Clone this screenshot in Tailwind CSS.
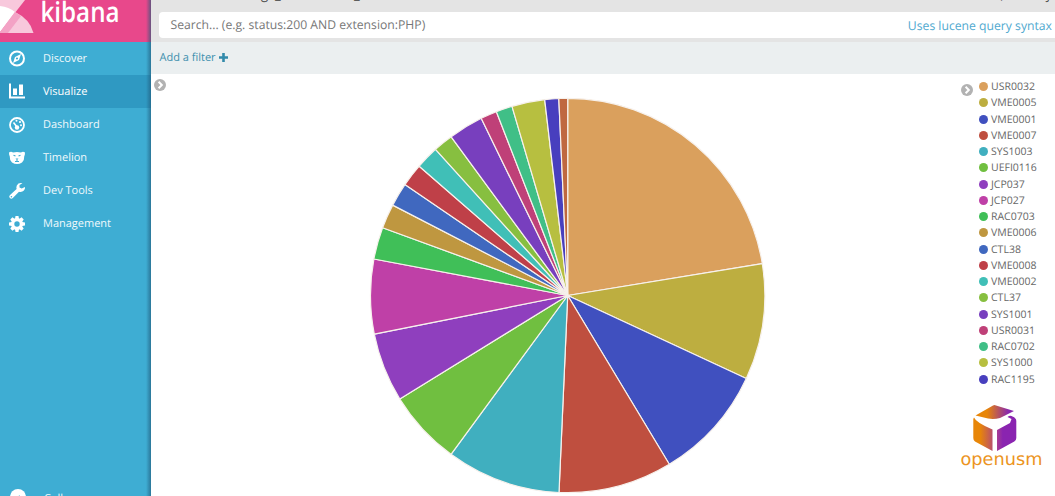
<!DOCTYPE html>
<html lang="en">
<head>
<meta charset="utf-8">
<title>Kibana</title>
<script src="https://cdn.jsdelivr.net/npm/@tailwindcss/browser@4"></script>
</head>
<body class="h-[496px] w-[1055px] overflow-hidden bg-white font-['Open_Sans',sans-serif] [text-rendering:geometricPrecision]">
<div class="flex h-[496px] overflow-hidden">
  <aside class="relative flex w-[151px] shrink-0 flex-col bg-[#3eadd3] text-[11px] text-[#f0f9fc]">
    <div class="h-[42px] shrink-0 bg-[#e8488b]">
      <svg width="151" height="42" viewBox="0 0 151 42">
        <path d="M0 0H25L0 32Z" fill="#f8c8dc"/>
        <path d="M0 6Q9 7 15 12L0 32Z" fill="#fff"/>
        <path d="M15 12Q30 19 33.500 33H0Z" fill="#f8c8dc"/>
        <path d="M15 12L21 16L8 33H0V32Z" fill="#f3a2c5"/>
        <text x="40.500" y="21.500" textLength="79" lengthAdjust="spacingAndGlyphs" font-family="Open Sans" font-size="28" font-weight="600" fill="#fff">kibana</text>
      </svg>
    </div>
    <nav class="flex flex-col">
      <a class="flex h-[33px] items-center gap-[17px] pl-2">
        <svg width="18" height="18" viewBox="0 0.500 18 18"><circle cx="9" cy="9" r="7" fill="none" stroke="#fff" stroke-width="2"/><path d="M13 4.500L11 10.500L5 13.500L7 7.500ZM9 7.900A1.100 1.100 0 1 0 9 10.100A1.100 1.100 0 1 0 9 7.900" fill="#fff" fill-rule="evenodd"/></svg>
        <span class="pt-[2px]">Discover</span></a>
      <a class="flex h-[33px] items-center gap-[17px] bg-[#2f99c2] pl-2 text-white">
        <svg width="18" height="18" viewBox="0 0.500 18 18"><path d="M1 1H3V14H17V16H1ZM5 6H9V12.500H5ZM11 2H15V12.500H11Z" fill="#fff"/></svg>
        <span class="pt-[2px]">Visualize</span></a>
      <a class="flex h-[33px] items-center gap-[17px] pl-2">
        <svg width="18" height="18" viewBox="0 0 18 18"><circle cx="9" cy="9" r="7" fill="none" stroke="#fff" stroke-width="1.800"/><circle cx="9" cy="11.500" r="2.200" fill="#fff"/><path d="M5.500 6.500L9 11" stroke="#fff" stroke-width="1.600"/><circle cx="8.500" cy="4.800" r="1" fill="#fff"/><circle cx="12" cy="6" r="1.100" fill="#fff"/><circle cx="13" cy="9.200" r="1" fill="#fff"/></svg>
        <span class="pt-[2px]">Dashboard</span></a>
      <a class="flex h-[33px] items-center gap-[17px] pl-2">
        <svg width="18" height="18" viewBox="0 0 18 18"><path d="M1 3.500Q3 2 5 3.500Q9 2.500 13 3.500Q15 2 17 3.500Q17 6 16.300 7Q16.500 11 14 13.500Q9 16.500 4 13.500Q1.500 11 1.700 7Q1 6 1 3.500Z" fill="#fff"/><path d="M5.500 6.300L7.500 7M12.500 6.300L10.500 7M7 12.500H11M9 10.500V12.500" stroke="#3eadd3" stroke-width="1.100"/><path d="M7.500 9.500H10.500L9 11Z" fill="#3eadd3"/></svg>
        <span class="pt-[2px]">Timelion</span></a>
      <a class="flex h-[33px] items-center gap-[17px] pl-2">
        <svg width="18" height="18" viewBox="0 0 18 18"><path d="M14.500 1.300Q10.500.3 8.800 3.500Q8 5.500 8.600 7L1.800 13.200Q.5 14.700 1.900 16.100Q3.400 17.300 4.800 16L11 9.800Q14 10.500 15.900 8.500Q17.400 6.700 17 5L13.700 6.600L11.500 5.500V3.100Z" fill="#fff"/><circle cx="3.400" cy="14.700" r=".8" fill="#3eadd3"/></svg>
        <span class="pt-[2px]">Dev Tools</span></a>
      <a class="flex h-[33px] items-center gap-[17px] pl-2">
        <svg width="18" height="18" viewBox="0 0 18 18"><g fill="#fff"><path d="M7.500 1H10.500L11 4H7ZM7.500 17H10.500L11 14H7ZM1 7.500V10.500L4 11V7ZM17 7.500V10.500L14 11V7Z"/><path transform="rotate(45 9 9)" d="M7.500 1H10.500L11 4H7ZM7.500 17H10.500L11 14H7ZM1 7.500V10.500L4 11V7ZM17 7.500V10.500L14 11V7Z"/></g><circle cx="9" cy="9" r="4.300" fill="none" stroke="#fff" stroke-width="3.200"/></svg>
        <span class="pt-[2px]">Management</span></a>
    </nav>
    <a class="mt-auto -mb-[19px] flex h-[33px] shrink-0 items-center gap-[17px] pl-[9px]">
      <svg class="overflow-visible" width="18" height="18" viewBox="0 0 18 18"><circle cx="9" cy="7" r="8" fill="#fff"/><path d="M11 6L7 10L11 14" fill="none" stroke="#3eadd3" stroke-width="2"/></svg>
      <span class="pt-[2px]">Collapse</span></a>
    <div class="absolute inset-y-0 right-0 w-[5px] bg-linear-to-r from-transparent to-[#20597a]/65"></div>
  </aside>

  <main class="flex min-w-0 flex-1 flex-col">
    <header class="relative h-[42px] shrink-0 overflow-hidden bg-[#e4e4e4] pt-3 pl-2">
      <div class="absolute -top-[15px] left-[110px] flex h-[18px] text-[13px] leading-[18px] text-[#444]"><span class="w-[14px]">g</span><span class="w-[79px]">_</span><span>_</span></div>
      <div class="absolute -top-[15px] right-[3px] flex h-[18px] text-[13px] leading-[18px] text-[#444]"><span class="w-[45px]">,</span><span>y</span></div>
      <div class="flex h-[26px] items-center justify-between rounded-l bg-white pr-[3px] pl-[11.500px]">
        <span class="text-[12.200px] text-[#777]">Search... (e.g. status:200 AND extension:PHP)</span>
        <span class="pt-[2px] text-[12.200px] text-[#50a9cf]">Uses lucene query syntax</span>
      </div>
    </header>
    <div class="flex h-8 shrink-0 items-center gap-[3px] bg-[#ebeff0] pl-[8.500px] text-[11px] text-[#3f8fae]">
      <span>Add a filter</span>
      <svg class="mb-px" width="9" height="9" viewBox="0 0 9 9"><path d="M4.500 0V9M0 4.500H9" stroke="#328aaa" stroke-width="2.600"/></svg>
    </div>
    <section class="flex flex-1">
      <svg class="mt-[5px] ml-[3px] shrink-0" width="12" height="12" viewBox="0 0 12 12"><circle cx="6" cy="6" r="6" fill="#b2b2b2"/><path d="M4.600 2.800L7.800 6L4.600 9.200" fill="none" stroke="#fff" stroke-width="2"/></svg>
      <svg class="ml-[194px] shrink-0" width="420" height="422" viewBox="360 74 420 422" stroke="#f7f1ec" stroke-width="1.200" stroke-linejoin="bevel">
        <path fill="#daa05d" d="M567.700 295.500V98.300A197.200 197.200 0 0 1 762.300 263.700Z"/>
        <path fill="#bdae40" d="M567.700 295.500L762.300 263.700A197.200 197.200 0 0 1 746.300 378.500Z"/>
        <path fill="#4050bf" d="M567.700 295.500L746.300 378.500A197.200 197.200 0 0 1 669.300 464.300Z"/>
        <path fill="#bf4f3f" d="M567.700 295.500L669.300 464.300A197.200 197.200 0 0 1 559 492.500Z"/>
        <path fill="#40afbf" d="M567.700 295.500L559 492.500A197.200 197.200 0 0 1 451 454.300Z"/>
        <path fill="#70bf40" d="M567.700 295.500L451 454.300A197.200 197.200 0 0 1 399.800 399Z"/>
        <path fill="#8f3fbe" d="M567.700 295.500L399.800 399A197.200 197.200 0 0 1 374.300 334.100Z"/>
        <path fill="#bf40a7" d="M567.700 295.500L374.300 334.100A197.200 197.200 0 0 1 373.900 259Z"/>
        <path fill="#40bf58" d="M567.700 295.500L373.900 259A197.200 197.200 0 0 1 382.600 227.700Z"/>
        <path fill="#bf9740" d="M567.700 295.500L382.600 227.700A197.200 197.200 0 0 1 392.700 205.100Z"/>
        <path fill="#4068bf" d="M567.700 295.500L392.700 205.100A197.200 197.200 0 0 1 404.900 184.600Z"/>
        <path fill="#bf4048" d="M567.700 295.500L404.900 184.600A197.200 197.200 0 0 1 419.200 166.200Z"/>
        <path fill="#40bfb7" d="M567.700 295.500L419.200 166.200A197.200 197.200 0 0 1 435.500 149.300Z"/>
        <path fill="#87bf40" d="M567.700 295.500L435.500 149.300A197.200 197.200 0 0 1 451.200 136.800Z"/>
        <path fill="#783fbe" d="M567.700 295.500L451.200 136.800A197.200 197.200 0 0 1 481.200 118.300Z"/>
        <path fill="#bf4078" d="M567.700 295.500L481.200 118.300A197.200 197.200 0 0 1 496.400 111.700Z"/>
        <path fill="#40bf87" d="M567.700 295.500L496.400 111.700A197.200 197.200 0 0 1 512 106.300Z"/>
        <path fill="#b7bf40" d="M567.700 295.500L512 106.300A197.200 197.200 0 0 1 544.700 99.600Z"/>
        <path fill="#483fbe" d="M567.700 295.500L544.700 99.600A197.200 197.200 0 0 1 558.800 98.500Z"/>
        <path fill="#bf6840" d="M567.700 295.500L558.800 98.500A197.200 197.200 0 0 1 567.700 98.300Z"/>
      </svg>
      <svg class="mt-[9.500px] ml-[181px] shrink-0" width="12" height="12" viewBox="0 0 12 12"><circle cx="6" cy="6" r="6" fill="#b2b2b2"/><path d="M4.600 2.800L7.800 6L4.600 9.200" fill="none" stroke="#fff" stroke-width="2"/></svg>
      <div class="flex w-[82px] flex-col pt-[4.500px]">
        <ul class="ml-[6px] flex flex-col text-[10.500px] leading-[16.250px] text-[#666]">
          <li class="flex h-[16.250px] items-center gap-[3px]"><i class="size-[9px] rounded-full bg-[#daa05d]"></i><span class="pt-px">USR0032</span></li>
          <li class="flex h-[16.250px] items-center gap-[3px]"><i class="size-[9px] rounded-full bg-[#bdae40]"></i><span class="pt-px">VME0005</span></li>
          <li class="flex h-[16.250px] items-center gap-[3px]"><i class="size-[9px] rounded-full bg-[#4050bf]"></i><span class="pt-px">VME0001</span></li>
          <li class="flex h-[16.250px] items-center gap-[3px]"><i class="size-[9px] rounded-full bg-[#bf4f3f]"></i><span class="pt-px">VME0007</span></li>
          <li class="flex h-[16.250px] items-center gap-[3px]"><i class="size-[9px] rounded-full bg-[#40afbf]"></i><span class="pt-px">SYS1003</span></li>
          <li class="flex h-[16.250px] items-center gap-[3px]"><i class="size-[9px] rounded-full bg-[#70bf40]"></i><span class="pt-px">UEFI0116</span></li>
          <li class="flex h-[16.250px] items-center gap-[3px]"><i class="size-[9px] rounded-full bg-[#8f3fbe]"></i><span class="pt-px">JCP037</span></li>
          <li class="flex h-[16.250px] items-center gap-[3px]"><i class="size-[9px] rounded-full bg-[#bf40a7]"></i><span class="pt-px">JCP027</span></li>
          <li class="flex h-[16.250px] items-center gap-[3px]"><i class="size-[9px] rounded-full bg-[#40bf58]"></i><span class="pt-px">RAC0703</span></li>
          <li class="flex h-[16.250px] items-center gap-[3px]"><i class="size-[9px] rounded-full bg-[#bf9740]"></i><span class="pt-px">VME0006</span></li>
          <li class="flex h-[16.250px] items-center gap-[3px]"><i class="size-[9px] rounded-full bg-[#4068bf]"></i><span class="pt-px">CTL38</span></li>
          <li class="flex h-[16.250px] items-center gap-[3px]"><i class="size-[9px] rounded-full bg-[#bf4048]"></i><span class="pt-px">VME0008</span></li>
          <li class="flex h-[16.250px] items-center gap-[3px]"><i class="size-[9px] rounded-full bg-[#40bfb7]"></i><span class="pt-px">VME0002</span></li>
          <li class="flex h-[16.250px] items-center gap-[3px]"><i class="size-[9px] rounded-full bg-[#87bf40]"></i><span class="pt-px">CTL37</span></li>
          <li class="flex h-[16.250px] items-center gap-[3px]"><i class="size-[9px] rounded-full bg-[#783fbe]"></i><span class="pt-px">SYS1001</span></li>
          <li class="flex h-[16.250px] items-center gap-[3px]"><i class="size-[9px] rounded-full bg-[#bf4078]"></i><span class="pt-px">USR0031</span></li>
          <li class="flex h-[16.250px] items-center gap-[3px]"><i class="size-[9px] rounded-full bg-[#40bf87]"></i><span class="pt-px">RAC0702</span></li>
          <li class="flex h-[16.250px] items-center gap-[3px]"><i class="size-[9px] rounded-full bg-[#b7bf40]"></i><span class="pt-px">SYS1000</span></li>
          <li class="flex h-[16.250px] items-center gap-[3px]"><i class="size-[9px] rounded-full bg-[#483fbe]"></i><span class="pt-px">RAC1195</span></li>
        </ul>
        <svg class="mt-[12px] -ml-[18px] shrink-0" width="95" height="74" viewBox="955 399 95 74">
          <defs>
            <linearGradient id="top"><stop offset=".3" stop-color="#e88608"/><stop offset=".85" stop-color="#8a28ad"/></linearGradient>
            <linearGradient id="left"><stop offset=".35" stop-color="#e88608"/><stop offset="1" stop-color="#b9506a"/></linearGradient>
            <linearGradient id="right"><stop offset="0" stop-color="#a83c92"/><stop offset=".3" stop-color="#8a24b0"/></linearGradient>
          </defs>
          <path d="M975.500 415.500L993 405.500Q994.500 404.500 996 405.500L1014 411L1000 418Q994 419.500 988 418.500Z" fill="url(#top)"/>
          <path d="M974 417.500Q976 422.500 992.500 429.500V451L975 441.500Q973.300 440.500 973.300 438V419Z" fill="url(#left)"/>
          <path d="M997 451V430L1010 423L1011.500 419L1007.500 417Q1010 415 1012.500 416.500Q1016.300 418 1016.300 421V438Q1016.300 440 1014.300 441.500Z" fill="url(#right)"/>
          <text x="960.500" y="465" textLength="82" lengthAdjust="spacingAndGlyphs" font-family="DejaVu Sans" font-size="17.500" fill="#ec9422">openusm</text>
        </svg>
      </div>
    </section>
  </main>
</div>
</body>
</html>
